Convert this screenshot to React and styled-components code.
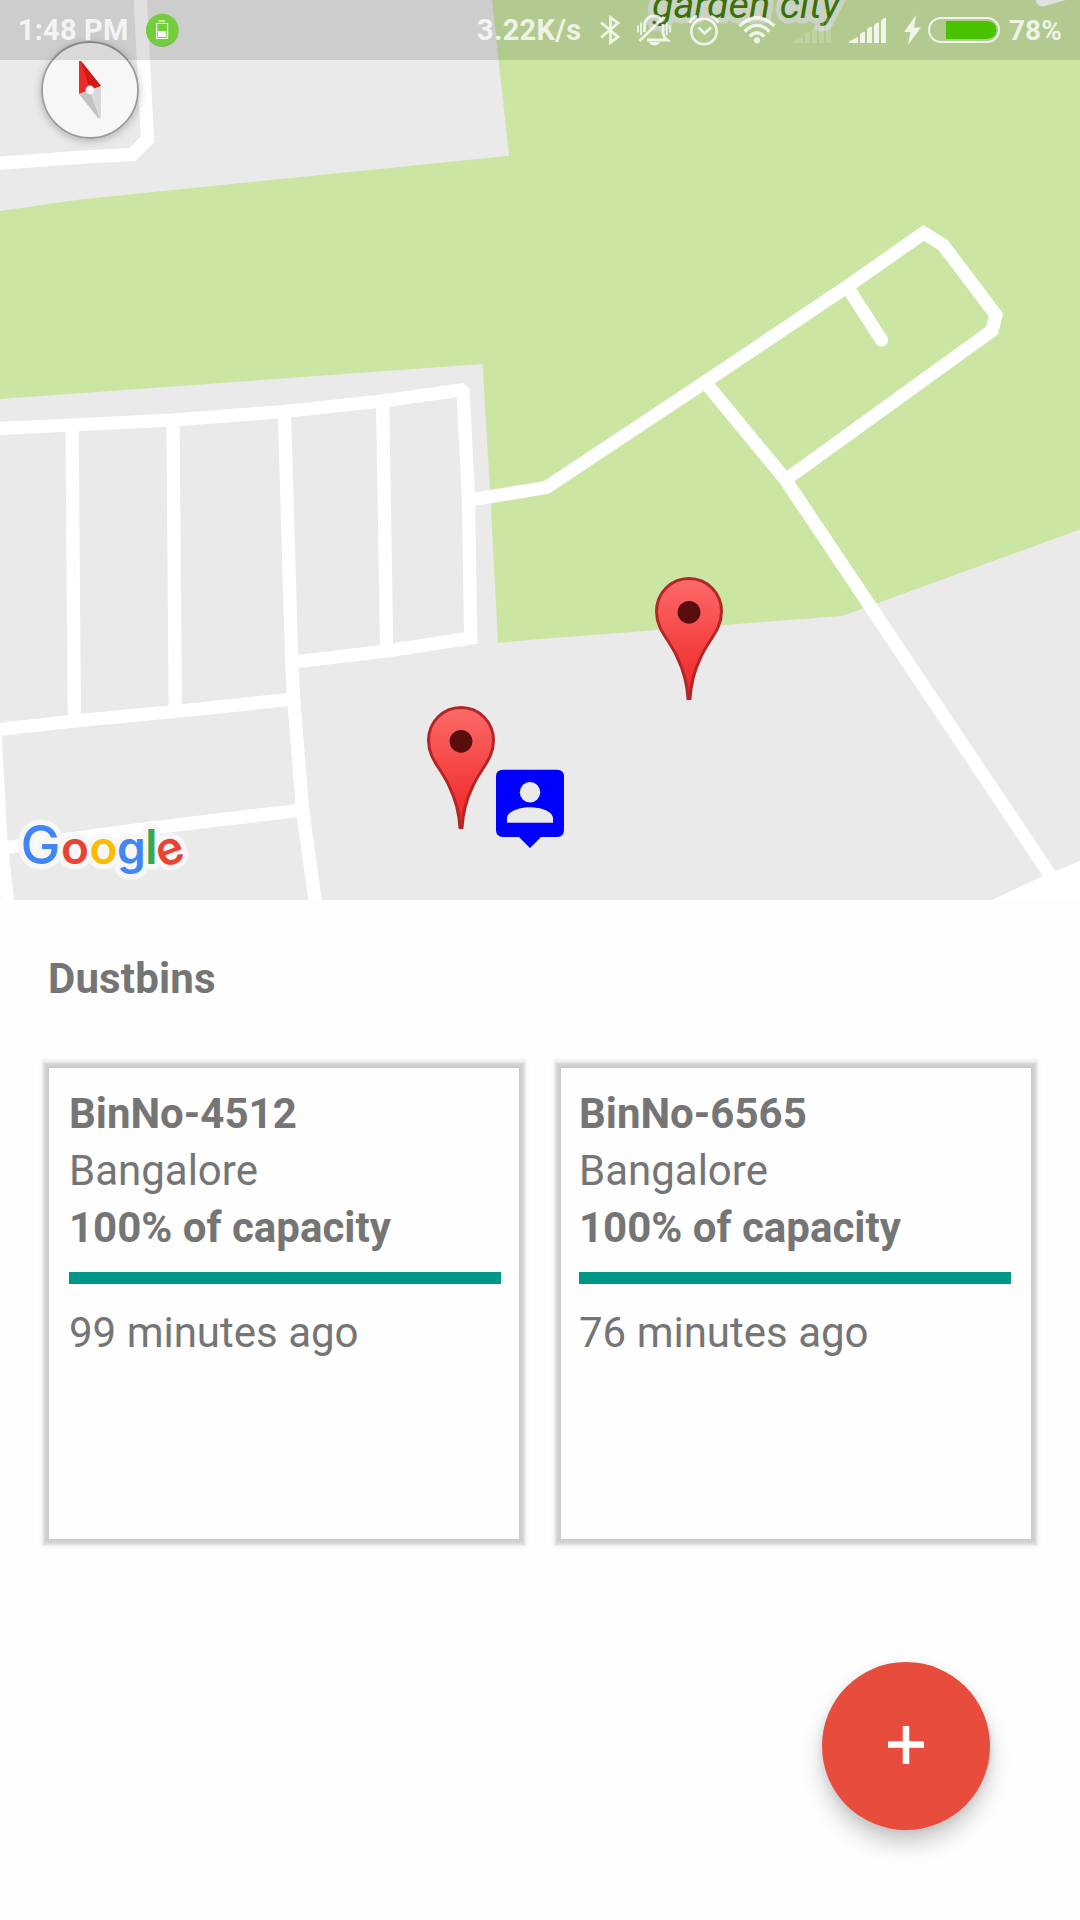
import React from "react";
import styled, { createGlobalStyle } from "styled-components";

const GlobalStyle = createGlobalStyle`
  *, *::before, *::after { box-sizing: border-box; }
  body { margin: 0; background: #fefefe; font-family: Roboto, "Liberation Sans", sans-serif; }
`;

const Screen = styled.div`
  position: relative;
  width: 1080px;
  height: 1920px;
  overflow: hidden;
  display: flex;
  flex-direction: column;
  background: #fefefe;
  color: #757575;
`;

const MapView = styled.section`
  position: relative;
  height: 900px;
  flex: none;
  overflow: hidden;
  background: #eaeaea;
`;

const MapCanvas = styled.svg`
  display: block;
`;

const MapLabel = styled.text`
  font-size: 39.5px;
  font-style: italic;
  fill: #43800b;
  stroke: #e6efdc;
  stroke-width: 11px;
  stroke-linejoin: round;
  paint-order: stroke;
`;

const LogoLetter = styled.text`
  font-family: Inter, sans-serif;
  font-size: ${(p) => p.$size}px;
  font-weight: ${(p) => p.$weight};
  text-anchor: middle;
  fill: ${(p) => p.$fill};
  stroke: ${(p) => (p.$outline ? "#f7f7f7" : "none")};
  stroke-width: 11px;
  stroke-linejoin: round;
`;

const StatusBar = styled.header`
  position: absolute;
  inset: 0 0 auto 0;
  height: 60px;
  background: rgba(0, 0, 0, 0.12);
  display: flex;
  align-items: center;
  padding: 0 19px 0 18px;
  color: rgba(255, 255, 255, 0.8);
  font-size: 29px;
  font-weight: 700;
  white-space: nowrap;
`;

const StatusText = styled.span`
  width: ${(p) => p.$width}px;
  margin-left: ${(p) => p.$gap || 0}px;
  font-size: ${(p) => p.$size || 29}px;
  letter-spacing: ${(p) => p.$spacing || 0}px;
`;

const Spacer = styled.div`
  flex: 1;
`;

const StatusIcon = styled.svg`
  display: block;
  flex: none;
  margin-left: ${(p) => p.$gap}px;
`;

const Content = styled.main`
  flex: 1;
  display: flex;
  flex-direction: column;
  padding: 54px 49px 0;
`;

const Heading = styled.h1`
  flex: none;
  height: 49px;
  margin: 0 0 65px -1px;
  font-size: 42px;
  line-height: 49px;
  font-weight: 700;
  letter-spacing: 0.15px;
`;

const CardRow = styled.div`
  display: grid;
  grid-template-columns: 470px 470px;
  gap: 42px;
`;

const Card = styled.article`
  height: 471px;
  padding: 17px 18px 0 ${(p) => p.$inset}px;
  background: #fefefe;
  box-shadow:
    0 0 0 1px #cacaca,
    0 0 0 3px #cfcfcf,
    0 0 0 4px #d4d4d4,
    0 0 0 5px #dadada,
    0 0 0 6px #e4e4e4,
    0 0 0 7px #eeeeee,
    0 -2px 0 7px #f5f5f5,
    0 1px 5px 7px rgba(0, 0, 0, 0.05);
`;

const CardLine = styled.p`
  margin: 0;
  font-size: 42px;
  line-height: 57px;
  font-weight: ${(p) => (p.$bold ? 700 : 400)};
`;

const Meter = styled.div`
  width: 432px;
  height: 12px;
  margin: 16px 0 20px;
`;

const MeterFill = styled.div`
  height: 100%;
  background: #009688;
`;

const Fab = styled.button`
  position: absolute;
  right: 90px;
  bottom: 90px;
  width: 168px;
  height: 168px;
  padding: 0;
  border: 0;
  border-radius: 50%;
  background: #e84c3d;
  box-shadow: 0 14px 22px rgba(0, 0, 0, 0.2), 0 2px 8px rgba(0, 0, 0, 0.08);
  display: grid;
  place-items: center;
`;

const bins = [
  { name: "BinNo-4512", city: "Bangalore", capacity: 100, age: "99 minutes ago", inset: 20 },
  { name: "BinNo-6565", city: "Bangalore", capacity: 100, age: "76 minutes ago", inset: 18 },
];

const roads = [
  "M140 -5 147.5 139.5 132.5 154.5 90 156.7 -5 163.5",
  "M-5 428.5 72 425 173 420 284 411.5 383 401 461 390 463 391.5 468.5 498 470.7 638 386.5 651 294 662",
  "M72 425 74.4 721",
  "M173 420 175.3 711",
  "M284.4 411 291.7 662 293.7 699 302.7 811 315.5 903",
  "M382.6 401 386.7 651",
  "M-5 730 74.4 721 175 711.5 294 699",
  "M-5 849 143 829 302 810",
  "M-5 735 1 842 8 905",
  "M470 500 540 488.5 547 487 705 382 848 286 923.5 233 943 245 996 315 992 330.5 788 478",
  "M705 382 785 479 1050 875",
];

const googleLetters = [
  { ch: "G", x: 40.5, size: 53.5, weight: 500, fill: "#4285f4" },
  { ch: "o", x: 75, size: 46, weight: 600, fill: "#ea4335" },
  { ch: "o", x: 103.5, size: 46, weight: 600, fill: "#fbbc05" },
  { ch: "g", x: 131.5, size: 46, weight: 600, fill: "#4285f4" },
  { ch: "l", x: 151.3, size: 48, weight: 600, fill: "#34a853" },
  { ch: "e", x: 170, size: 46, weight: 600, fill: "#ea4335", rotate: -20 },
];

function GoogleMark() {
  return [true, false].map((outline) =>
    googleLetters.map((l, i) => (
      <LogoLetter
        key={`${outline}-${i}`}
        x={l.x}
        y="864.3"
        $size={l.size}
        $weight={l.weight}
        $fill={outline ? "#f7f7f7" : l.fill}
        $outline={outline}
        aria-hidden={outline || undefined}
        transform={l.rotate ? `rotate(${l.rotate} 170 852)` : undefined}
      >
        {l.ch}
      </LogoLetter>
    ))
  );
}

function Pin({ x, y }) {
  return (
    <g transform={`translate(${x} ${y})`}>
      <path
        d="M34 1.5C52 1.5 66.5 16 66.5 34.5C66.5 47 60.5 55.5 56 62.5C51.5 69.5 48.5 74 45.5 81C40 92 36 107 35 121.5H33C32 107 28 92 22.5 81C19.5 74 16.5 69.5 12 62.5C7.5 55.5 1.5 47 1.5 34.5C1.5 16 16 1.5 34 1.5Z"
        fill="url(#pinFill)"
        stroke="#b32626"
        strokeWidth="3"
      />
      <circle cx="34" cy="35.3" r="11.4" fill="#5a0d0d" />
    </g>
  );
}

function CityMap() {
  return (
    <MapCanvas width="1080" height="900" viewBox="0 0 1080 900">
      <defs>
        <linearGradient id="pinFill" x1="0" y1="0" x2="0" y2="1">
          <stop offset="0" stopColor="#fc6a6a" />
          <stop offset="0.8" stopColor="#f23131" />
          <stop offset="1" stopColor="#e82a2a" />
        </linearGradient>
        <filter id="compassShadow" x="-30%" y="-30%" width="160%" height="160%">
          <feDropShadow dx="0" dy="2" stdDeviation="4" floodOpacity="0.25" />
        </filter>
      </defs>
      <path
        d="M0 211 80 199.5 360 171 509 155.7 492 0H1080V529.5L842 616 540 639 498 643 490 490 482.5 364 0 399Z"
        fill="#cbe6a3"
      />
      <g fill="none" stroke="#fff" strokeWidth="13.2" strokeLinejoin="miter">
        {roads.map((d) => (
          <path key={d} d={d} />
        ))}
        <path d="M848 288 881.5 340" strokeLinecap="round" />
        <path d="M1042.5 0 1090 -14" strokeLinecap="round" />
      </g>
      <path d="M992 900 1043 876 1080 861V900Z" fill="#fff" />
      <MapLabel x="652" y="18">
        garden city
      </MapLabel>
      <g filter="url(#compassShadow)">
        <circle cx="90" cy="90" r="48" fill="#f7f7f7" stroke="#9b9b9b" strokeWidth="1.8" />
      </g>
      <path d="M79 61 81 61 101 86 90 90 79 94Z" fill="#ee2a27" />
      <path d="M81 61 101 86 90 90Z" fill="#d41a14" />
      <path d="M79 94 90 90 100 118.5 98 118Z" fill="#c3c3c3" />
      <path d="M101 86 90 90 100 118.5 101 117Z" fill="#d9d9d9" />
      <circle cx="90" cy="90" r="4.4" fill="#f7f7f7" />
      <Pin x={427} y={706} />
      <Pin x={655} y={577} />
      <path
        d="M503 769.7H557Q564 769.7 564 776.7V830Q564 837 557 837H541L530 848 519 837H503Q496 837 496 830V776.7Q496 769.7 503 769.7Z"
        fill="#0000ff"
      />
      <circle cx="530" cy="792.3" r="10.2" fill="#eaeaea" />
      <path d="M507 822.7V818.5C507 811 520 807.2 530 807.2S553 811 553 818.5V822.7Z" fill="#eaeaea" />
      <GoogleMark />
    </MapCanvas>
  );
}

const bars = [
  "M0 26V24.5L9 20V26Z",
  "M11 26V17L14 15H16V26Z",
  "M18 26V12L21 9.7H23V26Z",
  "M25 26V8L28 5.7H30V26Z",
  "M32 26V3.5L35 1H37V26Z",
];

function Signal({ gap, faint }) {
  return (
    <StatusIcon $gap={gap} width="38" height="26" viewBox="0 0 38 26" fill="currentColor" opacity={faint ? 0.2 : 1}>
      {bars.map((d) => (
        <path key={d} d={d} />
      ))}
    </StatusIcon>
  );
}

function Status() {
  return (
    <StatusBar>
      <StatusText $width={128} $spacing={0.15}>
        1:48 PM
      </StatusText>
      <StatusIcon $gap={0} width="33" height="34" viewBox="0 0 33 34">
        <circle cx="16.3" cy="17.6" r="16.2" fill="#6fae4c" />
        <circle cx="16.3" cy="16.9" r="16.2" fill="#74cd3c" />
        <path d="M12.500 8.200H19M10.600 10.500H21.600V25.500H10.600Z" fill="none" stroke="#fff" strokeWidth="1.200" />
        <rect x="12" y="18" width="8.200" height="6" fill="#fff" />
      </StatusIcon>
      <Spacer />
      <StatusText $width={105} $spacing={0.3}>
        3.22K/s
      </StatusText>
      <StatusIcon $gap={17} width="22" height="32" viewBox="0 0 22 32" fill="none" stroke="currentColor" strokeWidth="2.8">
        <path d="M2 8.500 19 23 11.500 28.500V3.500L19 9 2 23.500" />
      </StatusIcon>
      <StatusIcon $gap={15} width="36" height="32" viewBox="0 0 36 32" fill="none" stroke="currentColor" strokeWidth="2.8">
        <path d="M8.500 18V11.500Q9.500 1.800 18 1.800Q22 1.800 24.500 4.500M27 10V18Q27.500 23.500 31 26H11" />
        <path d="M3.500 27 28 3" />
        <path d="M2 11.500V18.500M5 8.500V21M30.700 8.500V21M34.200 11.500V18.500" strokeWidth="1.8" />
        <path d="M13 28H24Q22 31.500 18.500 31.500T13 28Z" fill="currentColor" stroke="none" />
      </StatusIcon>
      <StatusIcon $gap={15} width="34" height="34" viewBox="0 0 34 34" fill="none" stroke="currentColor" strokeWidth="2.6">
        <circle cx="17" cy="18.500" r="12.700" />
        <path d="M11.500 14.500 17.500 20.500 24 14.500M2.500 9.500Q5 5 10 3M31.500 9.500Q29 5 24 3" />
      </StatusIcon>
      <StatusIcon $gap={16} width="40" height="30" viewBox="0 0 40 30" fill="none" stroke="currentColor" strokeWidth="3.3">
        <path d="M2.500 11Q20 -5.500 37.500 11M7.500 16.500Q20 4 32.500 16.500M12.700 21.500Q20 14 27.300 21.500" />
        <circle cx="20" cy="25.300" r="3.100" fill="currentColor" stroke="none" />
      </StatusIcon>
      <Signal gap={17} faint />
      <Signal gap={17} />
      <StatusIcon $gap={17} width="18" height="30" viewBox="0 0 18 30" fill="currentColor">
        <path d="M12 0 0 17H6.500L4 30 17 12.500H10Z" />
      </StatusIcon>
      <StatusIcon $gap={6} width="72" height="26" viewBox="0 0 72 26">
        <rect x="1" y="1" width="70" height="24" rx="12" fill="none" stroke="currentColor" strokeWidth="2" />
        <path d="M18 4H59Q68.500 5 68.500 13T59 22H18Z" fill="#49c300" />
      </StatusIcon>
      <StatusText $width={52} $gap={9} $size={28}>
        78%
      </StatusText>
    </StatusBar>
  );
}

function BinCard({ bin }) {
  return (
    <Card $inset={bin.inset}>
      <CardLine $bold>{bin.name}</CardLine>
      <CardLine>{bin.city}</CardLine>
      <CardLine $bold>{bin.capacity}% of capacity</CardLine>
      <Meter>
        <MeterFill style={{ width: `${bin.capacity}%` }} />
      </Meter>
      <CardLine>{bin.age}</CardLine>
    </Card>
  );
}

export default function App() {
  return (
    <Screen>
      <GlobalStyle />
      <MapView>
        <CityMap />
        <Status />
      </MapView>
      <Content>
        <Heading>Dustbins</Heading>
        <CardRow>
          {bins.map((bin) => (
            <BinCard key={bin.name} bin={bin} />
          ))}
        </CardRow>
      </Content>
      <Fab aria-label="Add dustbin">
        <svg width="38" height="40" viewBox="0 0 38 40" fill="none" stroke="#fff" strokeWidth="6.5">
          <path d="M19 0V38M1 18.5H37" />
        </svg>
      </Fab>
    </Screen>
  );
}
